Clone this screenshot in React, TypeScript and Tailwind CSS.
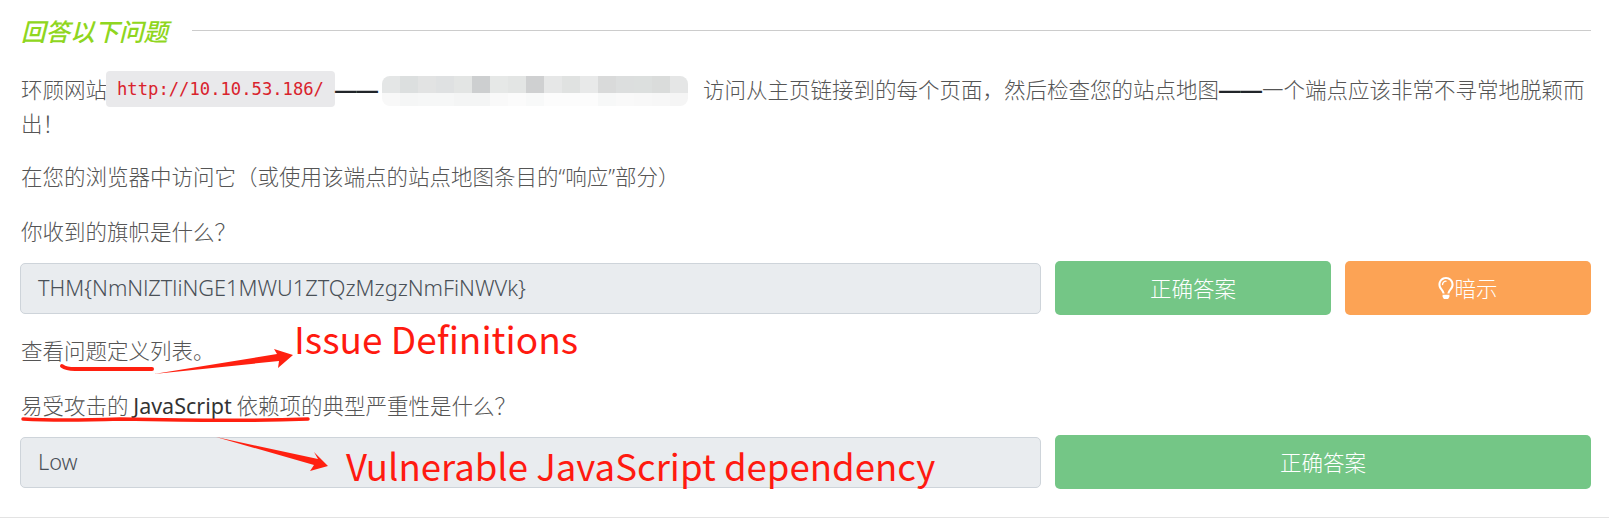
import { FaRegLightbulb } from 'react-icons/fa';

const mosaicTop = ['#e4e6e6', '#dcdfdf', '#e2e3e3', '#dfe1e2', '#e3e5e4', '#cdcfd0', '#e6e8e7', '#e3e5e4', '#cfd0d1', '#e6e7e7', '#e0e2e1', '#e8e9e9', '#d9dada', '#dcdede', '#dcdfde', '#dadcdb', '#e5e6e6'];
const mosaicBottom = ['#f8f8f8', '#f5f6f6', '#f6f7f7', '#f6f7f7', '#f4f5f5', '#f4f5f5', '#f9f9f9', '#fbfbfb', '#f8f9f9', '#fcfcfc', '#fcfcfc', '#fcfcfc', '#f7f8f8', '#f9f9f9', '#f8f8f8', '#f7f7f7', '#f5f5f5'];

const AnswerInput = ({ value }: { value: string }) => (
  <div className="flex h-[51px] w-[1021px] shrink-0 items-center rounded-[5px] border border-[#ced4da] bg-[#e9ecef] pl-[17px] font-['Noto_Sans',sans-serif] text-[21.75px] text-[#495057]">
    {value}
  </div>
);

const App = () => {
  return (
    <div className="relative h-[518px] w-[1609px] overflow-hidden bg-white font-['Noto_Sans_CJK_SC',sans-serif] text-[21.5px] font-light leading-[36px] text-[#555]">
      <div className="pl-[21px] pr-[18px]">
        <div className="flex h-[62px] items-center pb-[1px]">
          <h3 className="w-[171px] shrink-0 text-[24.5px] font-medium italic text-[#8fd620]">回答以下问题</h3>
          <div className="h-px grow bg-[#cccccc]" />
        </div>

        <p className="mt-[10px] leading-[34px]">
          环顾网站
          <code className="ml-[-1px] -my-[1px] inline-block h-[36px] rounded-[4px] bg-[#e9e9eb] px-[11px] align-top font-['DejaVu_Sans_Mono',monospace] text-[17.2px] font-normal leading-[36px] text-[#d9232d]">
            http://10.10.53.186/
          </code>
          <span className="font-['Liberation_Sans',sans-serif] font-bold leading-[0] text-[#212529]">——</span>
          <span className="ml-[4px] mr-[3px] inline-flex h-[30px] w-[306px] translate-y-[4px] flex-col overflow-hidden rounded-[8px] align-top">
            <span className="flex h-[17px]">
              {mosaicTop.map((color, i) => (
                <span key={i} className="h-full w-[18px]" style={{ backgroundColor: color }} />
              ))}
            </span>
            <span className="flex h-[13px]">
              {mosaicBottom.map((color, i) => (
                <span key={i} className="h-full w-[18px]" style={{ backgroundColor: color }} />
              ))}
            </span>
          </span>
          <span className="ml-[12px]">访问从主页链接到的每个页面，然后检查您的站点地图</span>
          <span className="font-['Liberation_Sans',sans-serif] font-bold leading-[0] text-[#212529]">——</span>
          一个端点应该非常不寻常地脱颖而出！
        </p>

        <p className="mt-[18px]">
          在您的浏览器中访问它（或使用该端点的站点地图条目的<span className="font-['Noto_Sans',sans-serif] leading-[0]">“</span>响应<span className="font-['Noto_Sans',sans-serif] leading-[0]">”</span>部分）
        </p>
        <p className="mt-[19px]">你收到的旗帜是什么？</p>

        <div className="ml-[-1px] mt-[12px] flex items-center gap-[14px]">
          <AnswerInput value="THM{NmNlZTliNGE1MWU1ZTQzMzgzNmFiNWVk}" />
          <button className="h-[54px] w-[276px] rounded-[5px] bg-[#74c686] text-white">正确答案</button>
          <button className="flex h-[54px] w-[246px] items-center justify-center rounded-[5px] bg-[#fca355] text-white">
            <FaRegLightbulb className="h-[22px] w-[16px]" />
            暗示
          </button>
        </div>

        <p className="mt-[17px]">查看问题定义列表。</p>
        <p className="mt-[19px]">
          易受攻击的 <span className="font-['Noto_Sans',sans-serif] font-normal leading-[0] text-[#333]">JavaScript</span> 依赖项的典型严重性是什么？
        </p>

        <div className="ml-[-1px] mt-[12px] flex items-center gap-[14px]">
          <AnswerInput value="Low" />
          <button className="h-[54px] w-[536px] rounded-[5px] bg-[#74c686] text-white">正确答案</button>
        </div>
      </div>

      <div className="absolute inset-x-0 bottom-0 h-px bg-[#e3e3e3]" />

      {/* annotations drawn over the screenshot */}
      <svg className="absolute left-0 top-0" width="1609" height="518" viewBox="0 0 1609 518">
        <path d="M62 366 Q66 369 75 369 L152 369" fill="none" stroke="#ff2010" strokeWidth="4" strokeLinecap="round" />
        <path d="M23 419 Q60 421 120 419 L180 420 Q250 421 308 419" fill="none" stroke="#ff2010" strokeWidth="3.5" strokeLinecap="round" />
        <path d="M154 374 L277 354 L274 349 L293 355 L278 368 L279 361 Z" fill="#ff2010" />
        <path d="M216 437 L318 459 L314 452 L328 466 L310 471 L314 465 Z" fill="#ff2010" />
      </svg>
      <span className="absolute left-[294px] top-[314px] font-['Noto_Sans_CJK_SC',sans-serif] text-[37px] font-normal leading-[48px] text-[#ff1a10]">
        Issue Definitions
      </span>
      <span className="absolute left-[346px] top-[441px] font-['Noto_Sans_CJK_SC',sans-serif] text-[36.6px] font-normal leading-[50px] text-[#ff1a10]">
        Vulnerable JavaScript dependency
      </span>
    </div>
  );
};

export default App;
